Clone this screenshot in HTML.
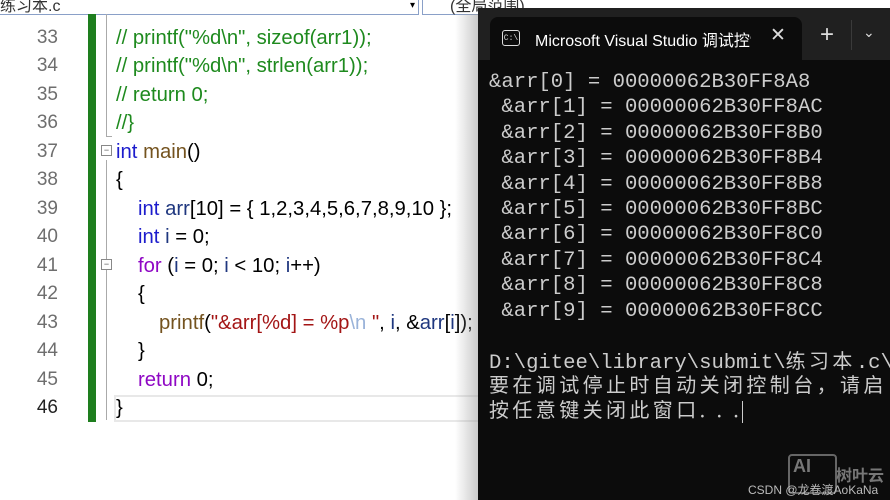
<!DOCTYPE html>
<html><head><meta charset="utf-8"><style>
body{margin:0;width:890px;height:500px;overflow:hidden;background:#fff;position:relative;font-family:"Liberation Sans","Noto Sans CJK SC",sans-serif}
.ln{position:absolute;left:20px;width:38px;text-align:right;font-size:19px;color:#6e6e6e}
.c{position:absolute;font-size:20.3px;white-space:pre;color:#000;margin-top:0px}
.cm{color:#1e8a1e}.kw{color:#1c1ccc}.fn{color:#74531f}.ct{color:#8f08c4}.st{color:#a31515}.es{color:#9ab3d9}.va{color:#1f377f}
.term{position:absolute;left:478px;top:8px;width:412px;height:492px;background:#0c0c0c}
.t{position:absolute;left:11px;font-family:"Liberation Mono","Noto Sans CJK SC",monospace;font-size:20.6px;color:#cccccc;white-space:pre}
.cjk{font-family:"Noto Sans CJK SC",sans-serif;font-size:20px;letter-spacing:3.4px}
</style></head><body>
<div style="position:absolute;left:0;top:0;width:418px;height:14px;background:#fff;border-bottom:1px solid #8aa0c8;border-right:1px solid #8aa0c8"></div>
<div style="position:absolute;left:0;top:-8px;font-size:16px;color:#333">练习本.c</div>
<div style="position:absolute;left:410px;top:0px;font-size:10px">▾</div>
<div style="position:absolute;left:422px;top:0;width:56px;height:14px;background:#fff;border-bottom:1px solid #8aa0c8;border-left:1px solid #8aa0c8"></div>
<div style="position:absolute;left:450px;top:-8px;font-size:16px;color:#333">(全局范围)</div>
<div style="position:absolute;left:88px;top:14px;width:8px;height:408px;background:#1e7e1e"></div>
<div style="position:absolute;left:106px;top:14px;width:1px;height:122px;background:#aaa"></div>
<div style="position:absolute;left:106px;top:136px;width:6px;height:1px;background:#aaa"></div>
<div style="position:absolute;left:106px;top:160px;width:1px;height:260px;background:#aaa"></div>
<div style="position:absolute;left:114px;top:395px;width:364px;height:27px;border:2px solid #e8e8e8;border-right:none;box-sizing:border-box"></div>
<div style="position:absolute;left:101px;top:145px;width:9px;height:9px;border:1px solid #888;font-size:9px;line-height:8px;text-align:center;color:#555;background:#fff">−</div>
<div style="position:absolute;left:101px;top:259px;width:9px;height:9px;border:1px solid #888;font-size:9px;line-height:8px;text-align:center;color:#555;background:#fff">−</div>
<div class="ln" style="top:27px">33</div><div class="c cm" style="left:116px;top:27px">// printf("%d\n", sizeof(arr1));</div>
<div class="ln" style="top:55px">34</div><div class="c cm" style="left:116px;top:55px">// printf("%d\n", strlen(arr1));</div>
<div class="ln" style="top:84px">35</div><div class="c cm" style="left:116px;top:84px">// return 0;</div>
<div class="ln" style="top:112px">36</div><div class="c cm" style="left:116px;top:112px">//}</div>
<div class="ln" style="top:141px">37</div><div class="c" style="left:116px;top:141px"><span class="kw">int</span> <span class="fn">main</span>()</div>
<div class="ln" style="top:169px">38</div><div class="c" style="left:116px;top:169px">{</div>
<div class="ln" style="top:198px">39</div><div class="c" style="left:138px;top:198px"><span class="kw">int</span> <span class="va">arr</span>[10] = { 1,2,3,4,5,6,7,8,9,10 };</div>
<div class="ln" style="top:226px">40</div><div class="c" style="left:138px;top:226px"><span class="kw">int</span> <span class="va">i</span> = 0;</div>
<div class="ln" style="top:255px">41</div><div class="c" style="left:138px;top:255px"><span class="ct">for</span> (<span class="va">i</span> = 0; <span class="va">i</span> &lt; 10; <span class="va">i</span>++)</div>
<div class="ln" style="top:283px">42</div><div class="c" style="left:138px;top:283px">{</div>
<div class="ln" style="top:312px">43</div><div class="c" style="left:159px;top:312px"><span class="fn">printf</span>(<span class="st">"&amp;arr[%d] = %p</span><span class="es">\n</span><span class="st"> "</span>, <span class="va">i</span>, &amp;<span class="va">arr</span>[<span class="va">i</span>]);</div>
<div class="ln" style="top:340px">44</div><div class="c" style="left:138px;top:340px">}</div>
<div class="ln" style="top:369px">45</div><div class="c" style="left:138px;top:369px"><span class="ct">return</span> 0;</div>
<div class="ln" style="top:397px;color:#222">46</div><div class="c" style="left:116px;top:397px">}</div>
<div style="position:absolute;left:455px;top:14px;width:23px;height:486px;background:linear-gradient(90deg,rgba(255,255,255,0),rgba(150,150,150,.5))"></div>
<div class="term">
<div style="position:absolute;left:0;top:0;width:412px;height:52px;background:#202020"></div>
<div style="position:absolute;left:12px;top:9px;width:312px;height:43px;background:#0c0c0c;border-radius:8px 8px 0 0"></div>
<div style="position:absolute;left:24px;top:22px;width:16px;height:14px;border:1.5px solid #ddd;border-radius:3px;font-family:'Liberation Mono';font-size:8px;color:#ddd;line-height:16px;text-align:center">C:\</div>
<div style="position:absolute;left:57px;top:19px;font-size:16px;color:#fff;white-space:nowrap;width:216px;overflow:hidden">Microsoft Visual Studio 调试控制台</div>
<div style="position:absolute;left:292px;top:16px;font-size:19px;color:#ddd">✕</div>
<div style="position:absolute;left:342px;top:13px;font-size:24px;color:#ddd">+</div>
<div style="position:absolute;left:373px;top:12px;width:1px;height:30px;background:#3a3a3a"></div>
<div style="position:absolute;left:385px;top:16px;font-size:14px;color:#ddd">⌄</div>
<div class="t" style="top:63px">&amp;arr[0] = 00000062B30FF8A8</div>
<div class="t" style="top:88px"> &amp;arr[1] = 00000062B30FF8AC</div>
<div class="t" style="top:114px"> &amp;arr[2] = 00000062B30FF8B0</div>
<div class="t" style="top:139px"> &amp;arr[3] = 00000062B30FF8B4</div>
<div class="t" style="top:165px"> &amp;arr[4] = 00000062B30FF8B8</div>
<div class="t" style="top:190px"> &amp;arr[5] = 00000062B30FF8BC</div>
<div class="t" style="top:215px"> &amp;arr[6] = 00000062B30FF8C0</div>
<div class="t" style="top:241px"> &amp;arr[7] = 00000062B30FF8C4</div>
<div class="t" style="top:266px"> &amp;arr[8] = 00000062B30FF8C8</div>
<div class="t" style="top:292px"> &amp;arr[9] = 00000062B30FF8CC</div>
<div class="t" style="top:337px">D:\gitee\library\submit\<span class="cjk">练习本</span>.c\</div>
<div class="t cjk" style="top:361px">要在调试停止时自动关闭控制台，请启</div>
<div class="t cjk" style="top:386px">按任意键关闭此窗口. . .<span style="display:inline-block;width:1px;height:22px;background:#ccc;vertical-align:middle"></span></div>
<div style="position:absolute;left:310px;top:446px;width:42px;height:36px;border:2px solid #666;border-radius:4px;color:#777;font-weight:bold;font-size:18px;padding-left:3px">AI</div>
<div style="position:absolute;left:358px;top:454px;font-size:16px;color:#777;font-weight:bold">树叶云</div>
<div style="position:absolute;left:270px;top:473px;font-size:12px;color:#bbb">CSDN @龙卷渡AoKaNa</div>
</div>
</body></html>
